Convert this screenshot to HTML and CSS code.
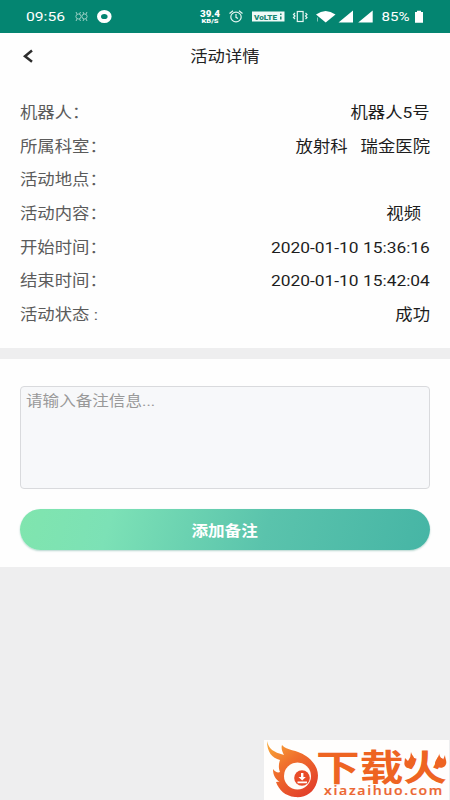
FILE: index.html
```html
<!DOCTYPE html>
<html lang="zh-CN">
<head>
<meta charset="utf-8">
<title>活动详情</title>
<link rel="stylesheet" href="styles.css">
</head>
<body>
<div class="screen">
  <div class="status">
    <svg width="450" height="33" viewBox="0 0 450 33">
      <g fill="#fff" font-family="Roboto, sans-serif">
        <text x="26" y="21" font-size="13.5" textLength="39" lengthAdjust="spacingAndGlyphs">09:56</text>
        <text x="200" y="16.500" font-size="9" font-weight="900" textLength="20" lengthAdjust="spacingAndGlyphs">39.4</text>
        <text x="201.500" y="22.800" font-size="6" font-weight="900" textLength="17" lengthAdjust="spacingAndGlyphs">KB/S</text>
        <text x="381.500" y="21" font-size="13" textLength="28" lengthAdjust="spacingAndGlyphs">85%</text>
      </g>
      <g fill="none" stroke="#9bd0c5" stroke-width="1">
        <ellipse cx="78.500" cy="16.500" rx="2.600" ry="2.500"/>
        <ellipse cx="84.500" cy="16.500" rx="2.600" ry="2.500"/>
        <path d="M76 12l1 2M80.500 12l-1 2M83 12l1 2M87 12l-1 2M76 21l1-2M80.500 21l-1-2M83 21l1-2M87 21l-1-2"/>
      </g>
      <ellipse cx="104.300" cy="16.500" rx="5.300" ry="4.600" fill="none" stroke="#fff" stroke-width="4"/>
      <g fill="none" stroke="#e5f5f1" stroke-width="1.200">
        <ellipse cx="236" cy="17" rx="5.200" ry="4.800"/>
        <path d="M236 14v3.300l2 1.200M229.500 13.500l3.500-2.700M242.500 13.500l-3.500-2.700"/>
        <rect x="297.300" y="11.500" width="5.800" height="10"/>
        <path d="M295 13l-1.500 1.500 1.500 1.500-1.500 1.500 1.500 1.500M305.500 13l1.500 1.500-1.500 1.500 1.500 1.500-1.500 1.500"/>
      </g>
      <rect x="252" y="11.500" width="32.500" height="10" fill="#effaf7"/>
      <text x="254" y="19.500" font-size="8" font-weight="900" font-family="Roboto, sans-serif" fill="#168773" textLength="23" lengthAdjust="spacingAndGlyphs">VoLTE</text>
      <path d="M280.800 13.500v1.500M280.800 16.500v3" stroke="#168773" stroke-width="1.500"/>
      <g fill="#fff">
        <path d="M316 14.500Q325.500 7.500 335.500 14.500L325.700 22.500z"/>
        <path d="M353 10.500v12h-14.500zM372.700 10.500v12h-14.500z"/>
        <path d="M415 12h2v-1.300h4V12h2v10.700h-8z"/>
      </g>
      <path d="M317.500 17.500v4" stroke="#7fc3b6"/>
    </svg>
  </div>
  <header class="header">
    <svg class="back" width="12" height="16" viewBox="0 0 12 16"><path d="M10 1.500L3 7.200l7 5.500" fill="none" stroke="#2d2d2d" stroke-width="2.500"/></svg>
    <h1 class="title">活动详情</h1>
  </header>
  <section class="details">
    <div class="row"><span class="label">机器人：</span><span class="value">机器人5号</span></div>
    <div class="row"><span class="label">所属科室：</span><span class="value">放射科&nbsp;&nbsp; 瑞金医院</span></div>
    <div class="row"><span class="label">活动地点：</span><span class="value"></span></div>
    <div class="row"><span class="label">活动内容：</span><span class="value value-inset">视频</span></div>
    <div class="row"><span class="label">开始时间：</span><span class="value">2020-01-10 15:36:16</span></div>
    <div class="row"><span class="label">结束时间：</span><span class="value">2020-01-10 15:42:04</span></div>
    <div class="row"><span class="label">活动状态 :</span><span class="value">成功</span></div>
  </section>
  <section class="remark">
    <div class="input"><span class="placeholder">请输入备注信息...</span></div>
    <div class="button"><span class="button-text">添加备注</span></div>
  </section>
  <div class="watermark">
    <svg width="185" height="60" viewBox="0 0 185 60">
      <defs>
        <linearGradient id="flame" x1="0" y1="0" x2="0.700" y2="1">
          <stop offset="0" stop-color="#f9ad3c"/><stop offset="0.450" stop-color="#f0702c"/><stop offset="1" stop-color="#e3412a"/>
        </linearGradient>
      </defs>
      <path d="M3 1C5 9 9 12 20 15C18 11 17 8 18 5C23 11 32 9 42 16C52 23 56 32 53 42C50 53 41 58 31 57C21 56 15 50 12 42Q15 41 17 43C11 39 9 35 9 29C11 32 14 33 16 32C14 27 15 23 16 20C8 18 3 12 3 1Z" fill="url(#flame)"/>
      <circle cx="33.500" cy="36" r="13.500" fill="#fffdfa"/>
      <circle cx="38" cy="38" r="7.800" fill="#e84b28"/>
      <path d="M37 33h2.400v4h2.400L38.200 40.500 34.500 37H37zM33.500 41.500h9.500v1.700h-9.500z" fill="#fff"/>
      <g fill="#ee6422" font-family="'Noto Sans CJK SC', sans-serif" font-weight="700" font-size="36">
        <text x="52" y="41" textLength="131" lengthAdjust="spacingAndGlyphs">下载火</text>
        <path d="M147 12C148 16 152 18 151 23C150 27 145 29 142 27C139 24 141 21 141 18L144 21Q147 17 147 12ZM175 12C175 17 178 18 179 20L181 15C181 19 184 22 181 26C178 29 173 28 171 24C171 19 176 17 175 12Z"/>
      </g>
      <text x="60" y="55" font-size="12.500" font-weight="600" font-family="'Open Sans', sans-serif" fill="#ec6731" stroke="#ec6731" stroke-width="0.200" letter-spacing="1.500" textLength="120" lengthAdjust="spacingAndGlyphs">xiazaihuo.com</text>
    </svg>
  </div>
</div>
</body>
</html>
```
FILE: styles.css
```css
* { box-sizing: border-box; }

body {
  margin: 0;
  font-family: Roboto, "Noto Sans CJK SC", sans-serif;
}

.screen {
  width: 450px;
  height: 800px;
  display: flex;
  flex-direction: column;
  background: #eeeeef;
  overflow: hidden;
}

.status {
  height: 33px;
  background: #048571;
}

.status svg,
.watermark svg { display: block; }

.header {
  height: 47px;
  display: grid;
  grid-template-columns: 50px 1fr 50px;
  align-items: center;
  background: #fefefe;
}

.back { margin-left: 22px; }

.title {
  margin: 0;
  text-align: center;
  font-size: 15.5px;
  font-weight: 400;
  line-height: 24px;
  color: #222;
  transform: scaleX(1.12);
}

.details {
  height: 268px;
  padding: 17px 20px 0;
  background: #fefefe;
}

.row {
  display: flex;
  justify-content: space-between;
  height: 33.7px;
  line-height: 33.7px;
  font-size: 15.5px;
  white-space: nowrap;
}

.label {
  color: #5b5b5b;
  transform: scaleX(1.12);
  transform-origin: left center;
}

.value {
  color: #1d1d1d;
  transform: scaleX(1.12);
  transform-origin: right center;
}

.value-inset { margin-right: 9px; }

.remark {
  height: 208px;
  margin-top: 11px;
  padding: 27px 20px 0;
  background: #fefefe;
}

.input {
  height: 103px;
  padding: 2px 5px;
  border: 1px solid #d9dadd;
  border-radius: 4px;
  background: #f7f8fa;
}

.placeholder {
  display: block;
  width: 300px;
  font-size: 14.8px;
  line-height: 24px;
  color: #999;
  transform: scaleX(1.12);
  transform-origin: left center;
}

.button {
  height: 41px;
  margin-top: 20px;
  display: flex;
  align-items: center;
  justify-content: center;
  border-radius: 21px;
  background: linear-gradient(105deg, #80e5ae 0%, #7ce1b6 22%, #5ac3ac 60%, #46b5a5 100%);
  box-shadow: 0 1px 2px #b5d5ce;
}

.button-text {
  font-size: 14.8px;
  font-weight: 700;
  color: #fff;
  transform: scaleX(1.12);
}

.watermark {
  width: 185px;
  height: 60px;
  margin: auto 1px 0 auto;
  background: #fffefd;
}
```
